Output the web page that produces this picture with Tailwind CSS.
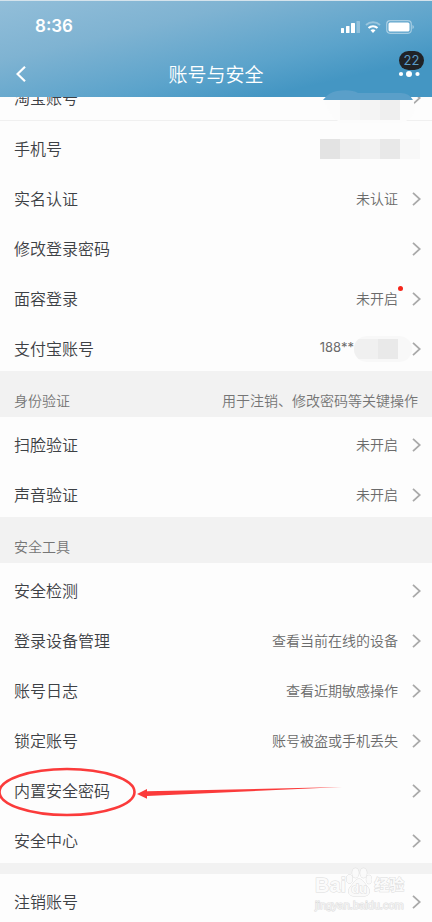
<!DOCTYPE html>
<html lang="zh-CN">
<head>
  <meta charset="UTF-8" />
  <meta name="viewport" content="width=device-width, initial-scale=1.0" />
  <title>账号与安全</title>
  <script src="https://cdn.jsdelivr.net/npm/@tailwindcss/browser@4"></script>
</head>
<body class="bg-[#fdfdfd] text-[#3d4145] font-[350] font-['Noto_Sans_CJK_SC',sans-serif]">
  <div class="relative h-screen overflow-hidden">
    <header class="relative z-10 h-[97px] border-t border-[#d5e3ec] bg-[linear-gradient(167deg,#92bed9_0%,#7fb3d2_30%,#5ba3cb_62%,#4496c3_80%)] text-white">
      <div class="flex items-center justify-between h-[52px] pl-[35px] pr-[18px] font-['Inter','Liberation_Sans',sans-serif]">
        <span class="text-[17px] font-semibold">8:36</span>
        <div class="flex items-center gap-[5px]">
          <svg class="w-[19px] h-3" viewBox="0 0 19 12" fill="#fff">
            <rect x="0" y="7" width="3" height="5" rx="0.5" />
            <rect x="5" y="5" width="3.5" height="7" rx="0.5" />
            <rect x="10" y="2" width="4" height="10" rx="0.5" />
            <rect x="15.500" y="0" width="3.500" height="12" rx="0.500" opacity=".3" />
          </svg>
          <svg class="w-4 h-3" viewBox="0 0 16 12" fill="none" stroke="#fff" stroke-width="2">
            <path d="M1 4a10.500 10.500 0 0 1 14 0" opacity=".35" />
            <path d="M3.500 7a6.500 6.500 0 0 1 9 0" />
            <path d="M5.500 9.300a4 4 0 0 1 5 0L8 12z" fill="#fff" stroke="none" />
          </svg>
          <svg class="w-7 h-[14px]" viewBox="0 0 28 14">
            <rect x="0.700" y="0.700" width="24.600" height="12.600" rx="3.500" fill="none" stroke="#fff" stroke-opacity=".45" stroke-width="1.200" />
            <rect x="2.500" y="2.500" width="21" height="9" rx="1.500" fill="#fff" />
            <path d="M26.500 5v4q1.300-.6 1.300-2t-1.300-2z" fill="#fff" fill-opacity=".5" />
          </svg>
        </div>
      </div>
      <div class="grid grid-cols-[1fr_auto_1fr] items-center h-[42px] px-3">
        <button type="button" aria-label="返回" class="justify-self-start p-1">
          <svg class="w-[10px] h-4" viewBox="0 0 10 16" fill="none" stroke="#fff" stroke-width="2.200"><path d="M9 .8 1.500 8 9 15.200" /></svg>
        </button>
        <h1 class="text-[19px] leading-7 font-[350]">账号与安全</h1>
        <button type="button" aria-label="更多" class="relative justify-self-end">
          <svg class="block w-[22px] h-[6px]" viewBox="0 0 22 6" fill="#fff"><circle cx="3" cy="3" r="2.100" /><circle cx="11" cy="3" r="3" /><circle cx="19.500" cy="3" r="2.100" /></svg>
          <span class="absolute bottom-[7px] -right-1 w-[25px] h-[19px] rounded-full bg-[#202226] text-[#5a9bc6] text-[13px] leading-[19px] text-center font-normal font-['Inter',sans-serif]">22</span>
        </button>
      </div>
    </header>

    <main id="settings" class="-mt-[26px]"></main>

    <!-- masked account name -->
    <svg class="absolute z-20 right-[15px] top-[89px] w-[96px] h-[34px]" viewBox="0 0 96 34">
      <path d="M2 11h89q4 3 2 11-3 10-14 12H20Q9 28 3 11z" fill="#fcfcfc" />
      <path d="M2 11Q8 3 16 2 30 0 37 4h43q8 0 12 7z" fill="#5a9fc9" />
      <path d="M19 11h20v20H19z" fill="#f7f7f7" />
      <path d="M39 11h20v20H39z" fill="#f4f4f4" />
      <path d="M59 11h20v20H59z" fill="#efefef" />
    </svg>

    <!-- highlight around the built-in security password -->
    <svg class="absolute z-20 left-0 top-[764px] w-[346px] h-[56px] pointer-events-none" viewBox="0 0 346 56">
      <ellipse cx="67" cy="28" rx="67.500" ry="23" fill="none" stroke="#fb3b3b" stroke-width="2.600" />
      <path d="M137 30 147 25v2.300L342 23 147 32v2.800z" fill="#fb3b3b" />
    </svg>

    <!-- watermark -->
    <div class="absolute z-20 right-[27px] top-[867px] w-[90px] whitespace-nowrap pointer-events-none font-['Liberation_Sans','Noto_Sans_CJK_SC',sans-serif] text-[#fbfbfb] [-webkit-text-stroke:1px_#dcdcdc] [paint-order:stroke_fill]">
      <div class="flex items-end h-[30px]">
        <span class="text-[20px] leading-6 font-bold">Bai</span>
        <span class="relative w-[26px] h-[30px] shrink-0">
          <svg class="absolute inset-0 w-[26px] h-[30px]" viewBox="0 0 26 30" fill="#fafafa" stroke="#dcdcdc">
            <ellipse cx="9.500" cy="6" rx="3.300" ry="4.800" /><ellipse cx="17.500" cy="6" rx="3.300" ry="4.800" />
            <ellipse cx="3.500" cy="12" rx="3" ry="4.300" /><ellipse cx="23" cy="12.500" rx="2.700" ry="4.300" />
            <path d="M13 12c4 0 5 4 8 7s4 9-2 10H7C1 28 2 22 5 19s4-7 8-7z" />
          </svg>
          <span class="absolute inset-x-0 bottom-0 text-center text-[13px] leading-4 font-bold">du</span>
        </span>
        <span class="pl-[2px] text-[15px] leading-6 font-bold">经验</span>
      </div>
      <div class="text-[11px] leading-4 text-[#f5f5f5]">jingyan.baidu.com</div>
    </div>
  </div>

  <script>
    const groups = [
      { items: [
        { label: '淘宝账号', line: true },
        { label: '手机号', mask: 'phone' },
        { label: '实名认证', value: '未认证' },
        { label: '修改登录密码' },
        { label: '面容登录', value: '未开启', dot: true },
        { label: '支付宝账号', value: '188**', mask: 'alipay' }
      ] },
      { title: '身份验证', note: '用于注销、修改密码等关键操作', items: [
        { label: '扫脸验证', value: '未开启' },
        { label: '声音验证', value: '未开启' }
      ] },
      { title: '安全工具', items: [
        { label: '安全检测' },
        { label: '登录设备管理', value: '查看当前在线的设备' },
        { label: '账号日志', value: '查看近期敏感操作' },
        { label: '锁定账号', value: '账号被盗或手机丢失' },
        { label: '内置安全密码' },
        { label: '安全中心' }
      ] },
      { gap: true, items: [{ label: '注销账号' }] }
    ];

    const arrow = '<svg class="w-[9px] h-[14px] shrink-0" viewBox="0 0 9 14" fill="none" stroke="#a9a9a9" stroke-width="1.800"><path d="M1 .8 7.800 7 1 13.200" /></svg>';
    const masks = {
      phone: '<span class="flex h-5 -mr-[22px]"><i class="w-5 bg-[#e3e3e3]"></i><i class="w-5 bg-[#eeeeee]"></i><i class="w-5 bg-[#f1f1f1]"></i><i class="w-5 bg-[#e8e8e8]"></i><i class="w-5 bg-[#f8f8f8]"></i></span>',
      alipay: '<span class="flex items-center h-[26px] w-[58px] -mr-[14px] rounded-full overflow-hidden bg-[#f8f8f8]"><i class="w-6 h-5 bg-[#f0f0f0]"></i><i class="w-5 h-5 bg-[#e9e9e9]"></i></span>'
    };

    function row(item) {
      const value = item.value ? `<span class="relative pb-[2px] text-sm text-[#6b6b6b] ${item.mask ? "text-[13px] font-normal font-['Inter',sans-serif]" : ''}">${item.value}${item.dot ? '<i class="absolute -right-[5px] -top-[2px] size-[5px] rounded-full bg-[#f5261b]"></i>' : ''}</span>` : '';
      return `<li><a href="#" class="flex items-center h-[50px] pt-[5px] pl-[14px] pr-[11px] ${item.line ? 'border-b border-[#f0f0f0]' : ''}">
        <span class="flex-1 pb-[2px] text-base">${item.label}</span>
        <span class="flex items-center mr-[14px]">${value}${item.mask ? masks[item.mask] : ''}</span>
        ${item.mask === 'phone' ? '<span class="w-[9px]"></span>' : arrow}
      </a></li>`;
    }

    document.getElementById('settings').innerHTML = groups.map(g => {
      let head = '';
      if (g.gap) head = '<div class="h-[11px] bg-[#f2f2f2]"></div>';
      if (g.title) head = `<div class="flex items-center justify-between h-[46px] pt-3 px-[14px] bg-[#f2f2f2] text-sm text-[#757575]"><h2>${g.title}</h2><span>${g.note || ''}</span></div>`;
      return `<section>${head}<ul>${g.items.map(row).join('')}</ul></section>`;
    }).join('');
  </script>
</body>
</html>
